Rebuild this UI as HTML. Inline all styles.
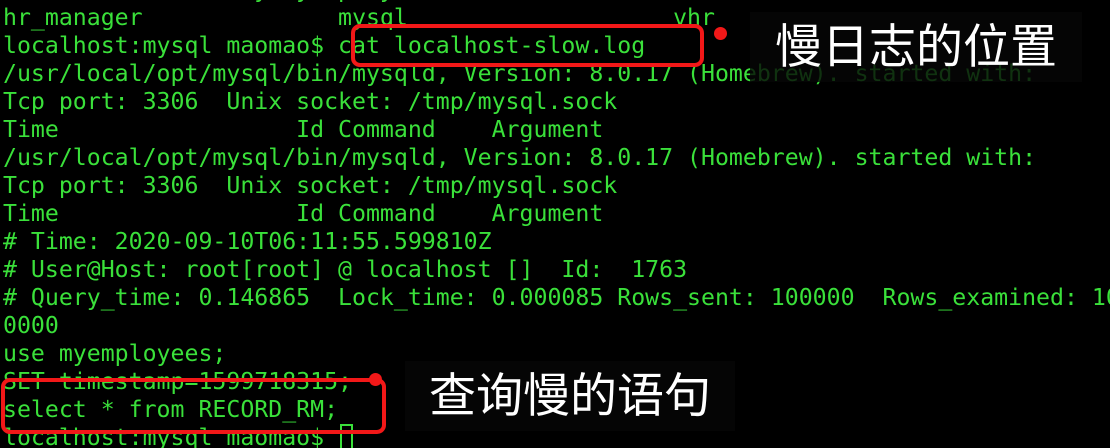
<!DOCTYPE html>
<html><head><meta charset="utf-8"><style>
html,body{margin:0;padding:0;background:#000;width:1110px;height:448px;overflow:hidden;position:relative}
pre{position:absolute;left:3px;top:-24px;margin:0;font-family:"DejaVu Sans Mono","Liberation Mono",monospace;font-size:23.2px;line-height:28px;color:#3ae03a;white-space:pre;letter-spacing:0}
.lab{position:absolute;background:rgba(6,6,6,0.8);color:#fff;font-family:"Liberation Sans","Noto Sans CJK SC",sans-serif;font-size:47px;line-height:70px;text-align:center}
.box{position:absolute;border:4px solid #f21818;border-radius:9px;box-sizing:border-box}
.dot{position:absolute;width:13px;height:13px;border-radius:50%;background:#f21818}
.cur{position:absolute;left:340px;top:424px;width:13px;height:26px;border:2px solid #3ae03a;box-sizing:border-box}
</style></head><body>
<pre>                 my myemployees
hr_manager              mysql                   vhr
localhost:mysql maomao$ cat localhost-slow.log
/usr/local/opt/mysql/bin/mysqld, Version: 8.0.17 (Homebrew). started with:
Tcp port: 3306  Unix socket: /tmp/mysql.sock
Time                 Id Command    Argument
/usr/local/opt/mysql/bin/mysqld, Version: 8.0.17 (Homebrew). started with:
Tcp port: 3306  Unix socket: /tmp/mysql.sock
Time                 Id Command    Argument
# Time: 2020-09-10T06:11:55.599810Z
# User@Host: root[root] @ localhost []  Id:  1763
# Query_time: 0.146865  Lock_time: 0.000085 Rows_sent: 100000  Rows_examined: 10
0000
use myemployees;
SET timestamp=1599718315;
select * from RECORD_RM;
localhost:mysql maomao$ </pre>
<div class="cur"></div>
<div class="lab" style="left:750px;top:12px;width:332px;height:70px">慢日志的位置</div>
<div class="lab" style="left:405px;top:361px;width:330px;height:70px">查询慢的语句</div>
<div class="box" style="left:351px;top:24px;width:353px;height:43px"></div>
<div class="dot" style="left:714px;top:27px"></div>
<div class="box" style="left:1px;top:378px;width:385px;height:56px"></div>
<div class="dot" style="left:369px;top:373px"></div>
</body></html>
